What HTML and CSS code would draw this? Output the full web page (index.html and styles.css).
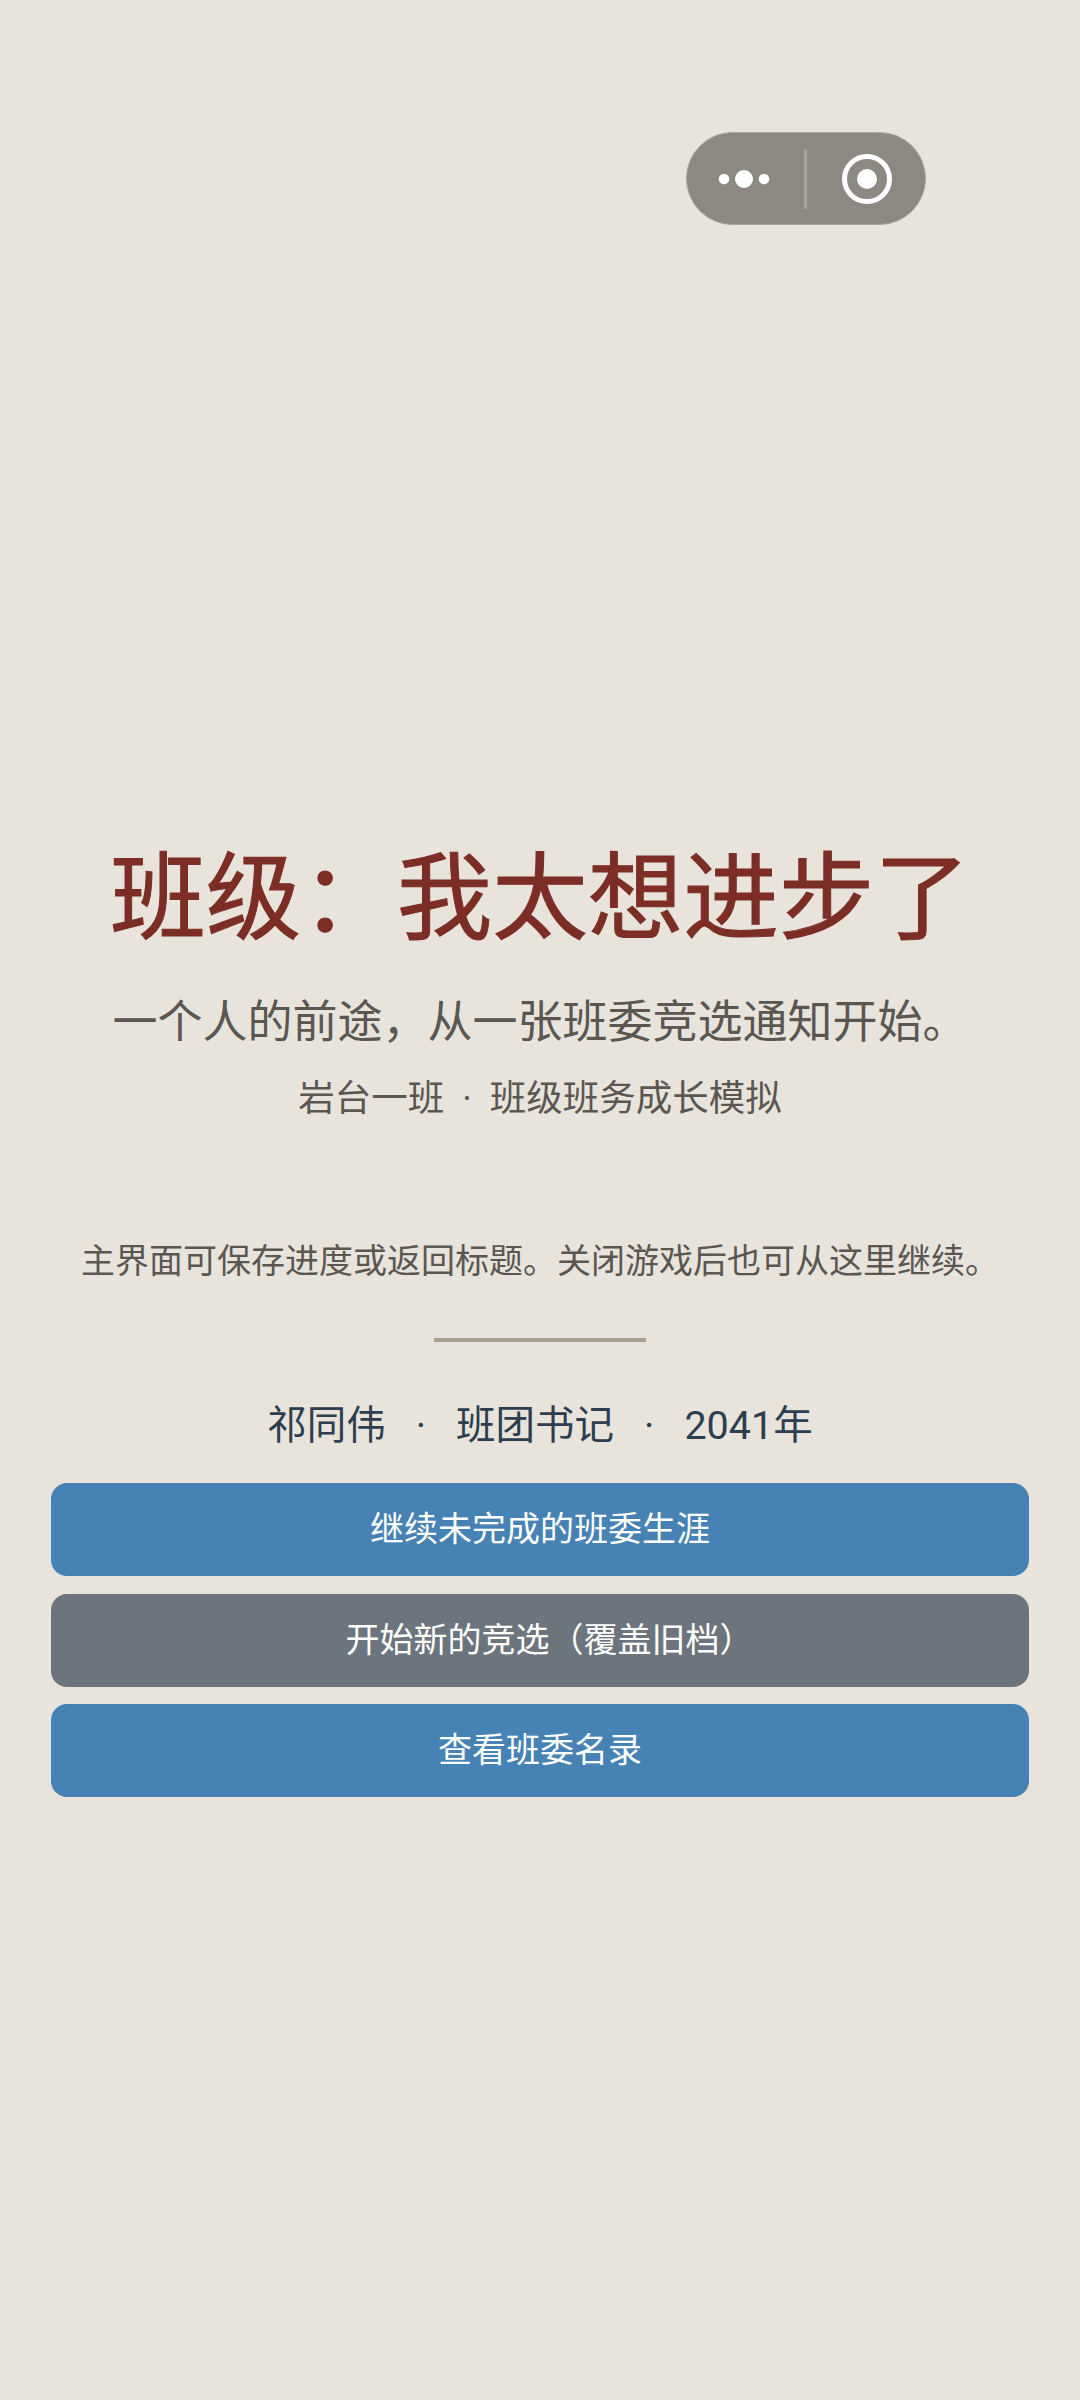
FILE: index.html
```html
<!DOCTYPE html>
<html lang="zh-CN">
<head>
<meta charset="utf-8">
<title>班级&#xFF1A;我太想进步了</title>
<link rel="stylesheet" href="styles.css">
</head>
<body>
<div class="capsule">
  <svg class="capsule-icon" width="240" height="93" viewBox="0 0 240 93" aria-hidden="true">
    <circle cx="38" cy="47" r="5.3" fill="#fff"/>
    <circle cx="58" cy="47" r="9" fill="#fff"/>
    <circle cx="78" cy="47" r="5.3" fill="#fff"/>
    <rect x="118" y="17" width="3" height="60" rx="1.5" fill="#a8a69f"/>
    <circle cx="181" cy="47" r="22.5" fill="none" stroke="#fff" stroke-width="5"/>
    <circle cx="181" cy="47" r="10" fill="#fff"/>
  </svg>
</div>
<main class="page">
  <header class="hero">
    <h1 class="title">班级&#xFF1A;我太想进步了</h1>
    <p class="subtitle">一个人的前途&#xFF0C;从一张班委竞选通知开始。</p>
    <p class="tagline">岩台一班<span class="dot">·</span>班级班务成长模拟</p>
  </header>
  <p class="hint">主界面可保存进度或返回标题。关闭游戏后也可从这里继续。</p>
  <div class="divider"></div>
  <p class="save">祁同伟<span class="sep">·</span>班团书记<span class="sep">·</span>2041年</p>
  <nav class="actions">
    <button class="btn btn-primary">继续未完成的班委生涯</button>
    <button class="btn btn-muted">开始新的竞选&#xFF08;覆盖旧档&#xFF09;</button>
    <button class="btn btn-primary">查看班委名录</button>
  </nav>
</main>
</body>
</html>
```

FILE: styles.css
```css
* { box-sizing: border-box; }
html, body { margin: 0; padding: 0; }
body {
  width: 1080px;
  height: 2400px;
  background: #e8e4dc;
  font-family: Roboto, "Noto Sans CJK SC", sans-serif;
  overflow: hidden;
  position: relative;
}
.capsule {
  position: absolute;
  left: 686px;
  top: 132px;
  width: 240px;
  height: 93px;
  border-radius: 47px;
  background: #8b8982;
  border: 1px solid #a8a69f;
}
.capsule-icon { position: absolute; left: -1px; top: -1px; display: block; }
.page {
  padding: 837px 51px 0;
  display: flex;
  flex-direction: column;
  align-items: center;
}
.hero { display: flex; flex-direction: column; align-items: center; }
.title {
  margin: 0;
  font-size: 95.5px;
  line-height: 124px;
  font-weight: 400;
  -webkit-text-stroke: 1px #7b2d26;
  color: #7b2d26;
  white-space: nowrap;
}
.subtitle {
  margin: 32px 0 0;
  font-size: 45px;
  line-height: 60px;
  color: #5c5650;
  white-space: nowrap;
}
.tagline {
  margin: 21px 0 0;
  font-size: 36.5px;
  line-height: 50px;
  color: #5c5650;
  white-space: nowrap;
}
.dot { margin: 0 18px; }
.hint {
  margin: 113px 0 0;
  font-size: 34px;
  line-height: 48px;
  color: #5c5650;
  white-space: nowrap;
}
.divider {
  margin-top: 53px;
  width: 212px;
  height: 4px;
  background: #a99e92;
}
.save {
  margin: 55px 0 0;
  font-size: 39.5px;
  line-height: 58px;
  color: #2c3e50;
  white-space: nowrap;
}
.sep { margin: 0 30px; }
.actions {
  align-self: stretch;
  margin-top: 28px;
  display: flex;
  flex-direction: column;
  gap: 17.5px;
}
.btn {
  height: 93px;
  border: 0;
  border-radius: 16px;
  font-family: inherit;
  font-size: 34px;
  color: #fff;
  padding: 0 0 6px;
}
.btn-primary { background: #4682b4; }
.btn-muted { background: #6c757d; padding-left: 19px; }
```
